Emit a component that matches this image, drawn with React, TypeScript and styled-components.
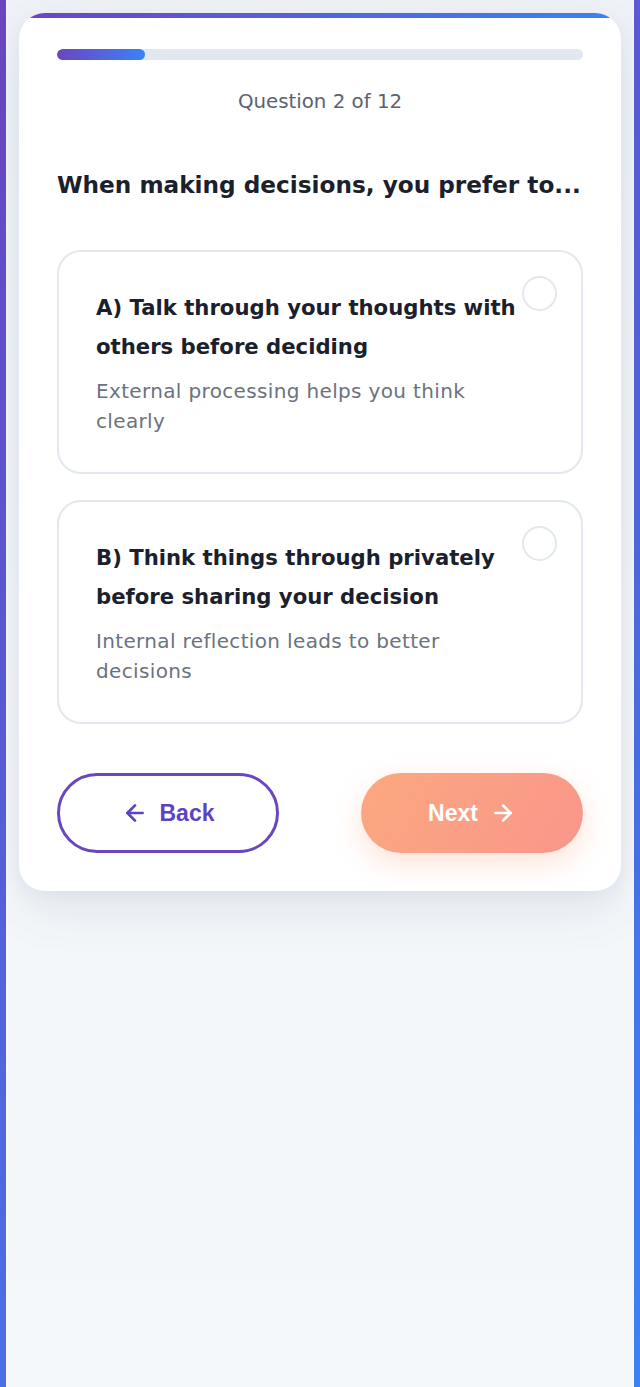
import React from "react";
import styled, { createGlobalStyle } from "styled-components";
import { ArrowLeft, ArrowRight } from "lucide-react";

const GlobalStyle = createGlobalStyle`
  html, body {
    margin: 0;
    padding: 0;
    min-height: 100%;
  }
  body {
    background: linear-gradient(135deg, #6b46c1 0%, #3b82f6 100%);
    background-attachment: fixed;
    font-family: "DejaVu Sans", "Noto Sans", sans-serif;
  }
  * { box-sizing: border-box; }
`;

const Shell = styled.div`
  margin: 0 6px;
  min-height: 1387px;
  border-left: 1px solid rgba(255, 255, 255, 0.45);
  border-right: 1px solid rgba(255, 255, 255, 0.45);
  background: linear-gradient(180deg, #eef2f6 0%, #f3f6f9 50%, #f5f8fb 100%);
  padding: 13px 12px 40px;
`;

const Card = styled.div`
  position: relative;
  overflow: hidden;
  background: #ffffff;
  border-radius: 26px;
  padding: 36px 38px 38px;
  box-shadow: 0 20px 50px rgba(30, 50, 90, 0.08), 0 6px 16px rgba(30, 50, 90, 0.04);

  &::before {
    content: "";
    position: absolute;
    top: 0;
    left: 0;
    right: 0;
    height: 5px;
    background: linear-gradient(90deg, #6b46c1 0%, #3b82f6 100%);
  }
`;

const Track = styled.div`
  height: 11px;
  border-radius: 6px;
  background: #e2e8f0;
  overflow: hidden;
`;

const Fill = styled.div`
  height: 100%;
  border-radius: 6px;
  background: linear-gradient(90deg, #6b46c1 0%, #3b82f6 100%);
`;

const Counter = styled.p`
  margin: 28px 0 0;
  text-align: center;
  font-size: 19.8px;
  line-height: 28px;
  color: #5a6270;
  font-weight: 400;
`;

const Heading = styled.h2`
  margin: 52px 0 0;
  font-size: 23.2px;
  line-height: 34px;
  font-weight: 700;
  color: #1a202c;
`;

const Options = styled.div`
  margin-top: 48px;
  display: flex;
  flex-direction: column;
  gap: 26px;
`;

const Option = styled.button`
  position: relative;
  display: block;
  width: 100%;
  text-align: left;
  background: #ffffff;
  border: 2px solid #e2e8f0;
  border-radius: 24px;
  padding: 36px 56px 36px 37px;
  font-family: inherit;
  cursor: pointer;
`;

const Radio = styled.span`
  position: absolute;
  top: 24px;
  right: 24px;
  width: 35px;
  height: 35px;
  border-radius: 50%;
  border: 2px solid #e2e8f0;
  background: #ffffff;
`;

const OptionTitle = styled.div`
  font-size: 21.2px;
  line-height: 39px;
  font-weight: 700;
  color: #1a202c;
`;

const OptionDesc = styled.div`
  margin-top: 10px;
  font-size: 20px;
  line-height: 30px;
  letter-spacing: 0.35px;
  color: #6b7280;
`;

const Actions = styled.div`
  margin-top: 49px;
  display: flex;
  justify-content: space-between;
`;

const Btn = styled.button<{ $primary?: boolean }>`
  width: 222px;
  height: 80px;
  border-radius: 40px;
  display: flex;
  align-items: center;
  justify-content: center;
  gap: 12px;
  font-family: "Liberation Sans", Arial, sans-serif;
  font-size: 23px;
  font-weight: 700;
  cursor: pointer;
  border: ${(p) => (p.$primary ? "none" : "3px solid #6b46c1")};
  color: ${(p) => (p.$primary ? "#ffffff" : "#5d43c3")};
  background: ${(p) =>
    p.$primary ? "linear-gradient(120deg, #fca87f 0%, #f9968b 100%)" : "#ffffff"};
  box-shadow: ${(p) =>
    p.$primary ? "0 10px 28px rgba(252, 150, 110, 0.28)" : "none"};
`;

const options = [
  {
    title: "A) Talk through your thoughts with others before deciding",
    desc: "External processing helps you think clearly",
  },
  {
    title: "B) Think things through privately before sharing your decision",
    desc: "Internal reflection leads to better decisions",
  },
];

export default function App() {
  const current = 2;
  const total = 12;
  return (
    <>
      <GlobalStyle />
      <Shell>
        <Card>
          <Track>
            <Fill style={{ width: `${(current / total) * 100}%` }} />
          </Track>
          <Counter>
            Question {current} of {total}
          </Counter>
          <Heading>When making decisions, you prefer to...</Heading>
          <Options>
            {options.map((o) => (
              <Option key={o.title} type="button">
                <Radio />
                <OptionTitle>{o.title}</OptionTitle>
                <OptionDesc>{o.desc}</OptionDesc>
              </Option>
            ))}
          </Options>
          <Actions>
            <Btn type="button">
              <ArrowLeft size={26} strokeWidth={2.5} />
              Back
            </Btn>
            <Btn type="button" $primary>
              Next
              <ArrowRight size={26} strokeWidth={2.5} />
            </Btn>
          </Actions>
        </Card>
      </Shell>
    </>
  );
}
